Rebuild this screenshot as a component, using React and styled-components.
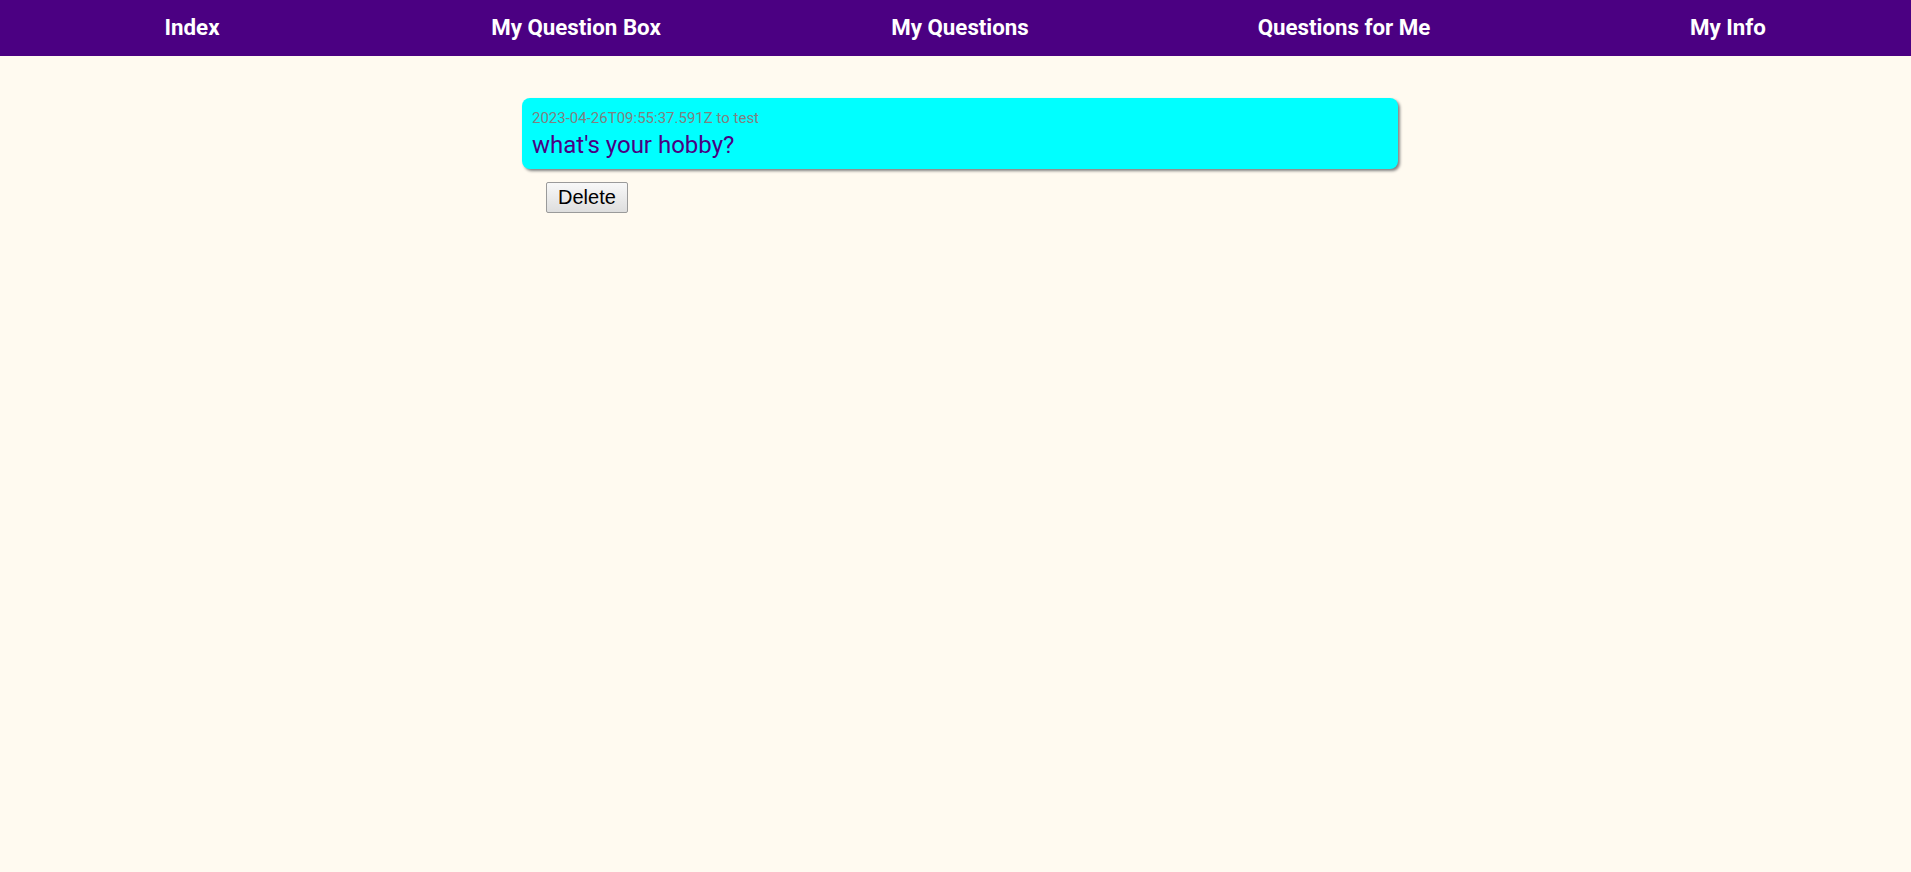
import React from "react";
import styled, { createGlobalStyle } from "styled-components";

const GlobalStyle = createGlobalStyle`
  html, body {
    margin: 0;
    padding: 0;
    background: #fffaf0;
    overflow: hidden;
  }
  body {
    font-family: Roboto, "Noto Sans", sans-serif;
  }
`;

const Page = styled.div`
  width: 1920px;
  min-height: 872px;
  background: #fffaf0;
`;

const NavBar = styled.nav`
  display: grid;
  grid-template-columns: repeat(5, 1fr);
  height: 56px;
  background: #4b0082;
`;

const NavLink = styled.a`
  display: flex;
  align-items: center;
  justify-content: center;
  color: #ffffff;
  font-family: Roboto, sans-serif;
  font-weight: 700;
  font-size: 22.3px;
  text-decoration: none;
  padding-bottom: 3px;
`;

const Main = styled.main`
  width: 876px;
  margin: 42px auto 0;
  display: flex;
  flex-direction: column;
  align-items: flex-start;
`;

const Card = styled.div`
  box-sizing: border-box;
  width: 100%;
  background: #00ffff;
  border-radius: 8px;
  box-shadow: 2px 2px 3px #808080;
  padding: 11px 10px 10px;
  display: flex;
  flex-direction: column;
  gap: 4px;
`;

const Meta = styled.div`
  font-family: Roboto, sans-serif;
  font-size: 15px;
  color: #808080;
`;

const Question = styled.div`
  font-family: Roboto, sans-serif;
  font-size: 24px;
  color: #4b0082;
`;

const Actions = styled.div`
  display: flex;
  padding: 13px 0 0 24px;
`;

const Button = styled.button`
  box-sizing: border-box;
  height: 31px;
  padding: 2px 11px;
  font-family: "Liberation Sans", Arial, sans-serif;
  font-size: 20px;
  color: #000;
  background: linear-gradient(#f8f8f8, #dedede);
  border: 1px solid #9a9a9a;
  border-radius: 2px;
`;

export default function App() {
  const links = ["Index", "My Question Box", "My Questions", "Questions for Me", "My Info"];
  return (
    <Page>
      <GlobalStyle />
      <NavBar>
        {links.map((l) => (
          <NavLink key={l} href="#">
            {l}
          </NavLink>
        ))}
      </NavBar>
      <Main>
        <Card>
          <Meta>2023-04-26T09:55:37.591Z to test</Meta>
          <Question>what's your hobby?</Question>
        </Card>
        <Actions>
          <Button>Delete</Button>
        </Actions>
      </Main>
    </Page>
  );
}
